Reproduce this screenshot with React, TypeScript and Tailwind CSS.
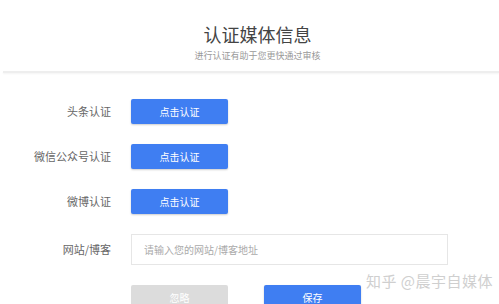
import React from "react";

const font = { fontFamily: '"Noto Sans CJK SC", "Noto Sans", sans-serif' };

function AuthRow({ label }: { label: string }) {
  return (
    <div className="flex items-center h-[25px]">
      <div className="w-[111px] text-right text-[11px] text-[#666]">{label}</div>
      <button className="ml-[20px] w-[97px] h-[25px] rounded-[2px] bg-[#3f7ef2] text-white text-[10px] shadow-[0_1px_2px_rgba(0,0,0,0.2)]">
        点击认证
      </button>
    </div>
  );
}

export default function App() {
  return (
    <div className="relative w-[499px] h-[304px] overflow-hidden bg-white" style={font}>
      <div className="pt-[22px] flex flex-col items-center">
        <h1 className="text-[18px] leading-[24px] text-[#444] ml-[16px]">认证媒体信息</h1>
        <p className="mt-[4px] text-[9px] leading-[12px] text-[#999] ml-[16px]">进行认证有助于您更快通过审核</p>
      </div>
      <div className="mt-[9px] ml-[3px] h-[2px] bg-[#eeeeee] shadow-[0_1px_2px_rgba(0,0,0,0.05)]" />
      <div className="mt-[26px] flex flex-col gap-[20px]">
        <AuthRow label="头条认证" />
        <AuthRow label="微信公众号认证" />
        <AuthRow label="微博认证" />
        <div className="flex items-center h-[31px]">
          <div className="w-[111px] text-right text-[11px] text-[#666]">网站/博客</div>
          <input
            className="ml-[20px] w-[317px] h-[31px] border border-[#e6e6e6] px-[12px] text-[10px] outline-none placeholder:text-[#aaa]"
            placeholder="请输入您的网站/博客地址"
          />
        </div>
        <div className="flex items-start ml-[131px]">
          <button className="w-[97px] h-[25px] rounded-[2px] bg-[#dcdcdc] text-white text-[10px]">忽略</button>
          <button className="ml-[36px] w-[97px] h-[25px] rounded-[2px] bg-[#3f7ef2] text-white text-[10px] shadow-[0_1px_2px_rgba(0,0,0,0.2)]">
            保存
          </button>
        </div>
      </div>
      <div className="absolute left-[366px] top-[272px] text-[15px] leading-[18px] text-[#cfcfcf] tracking-[0.5px]">知乎 @晨宇自媒体</div>
    </div>
  );
}
